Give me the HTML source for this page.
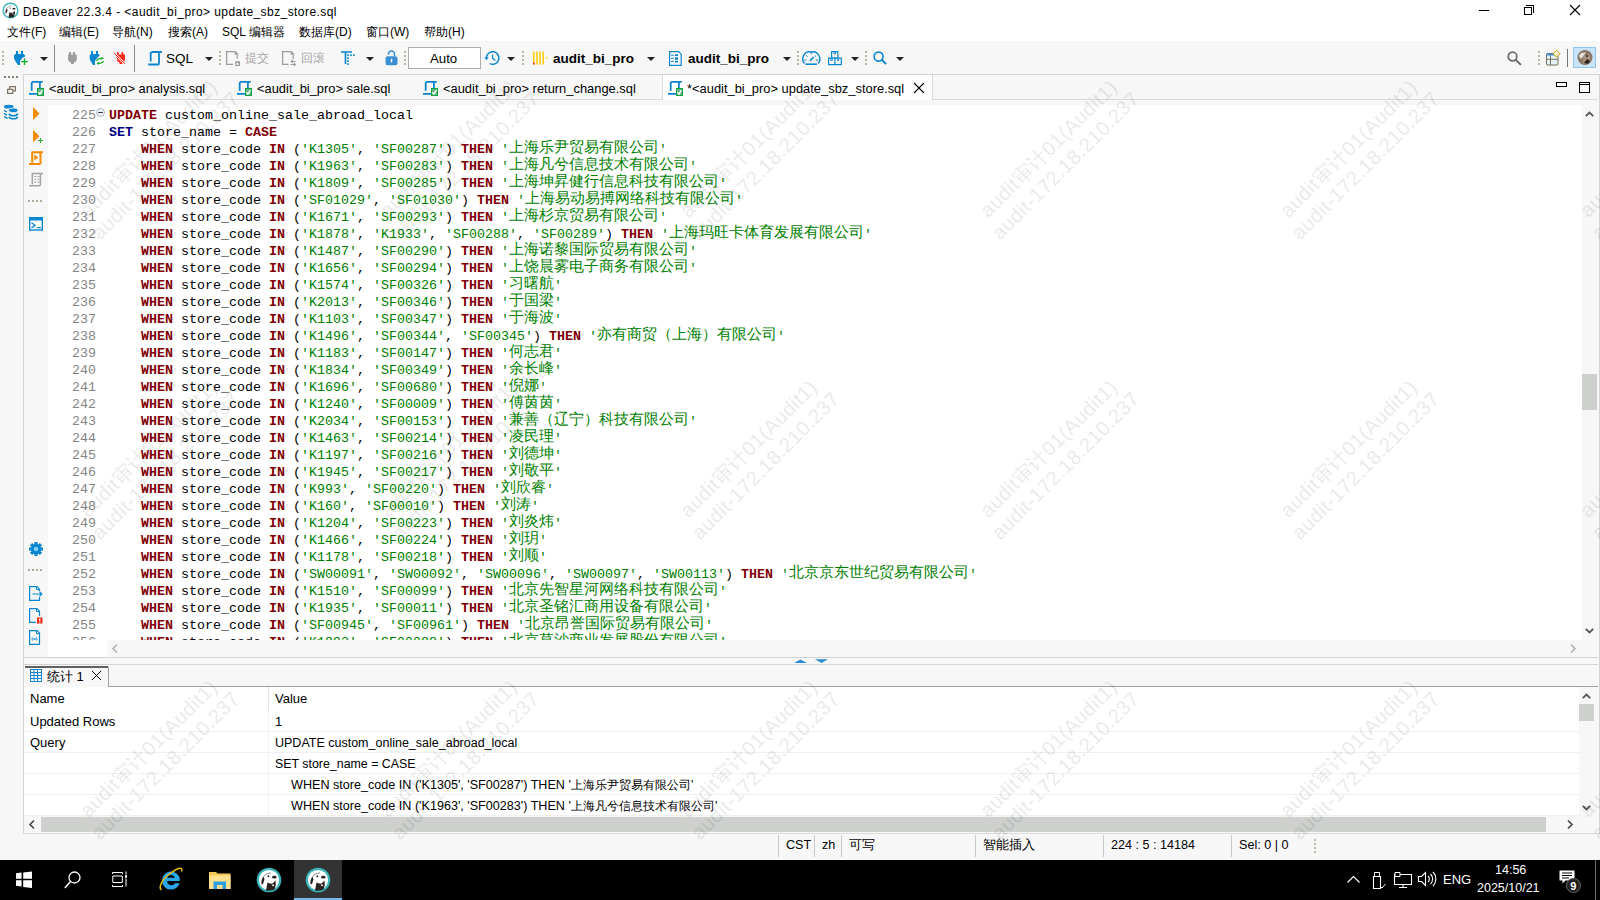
<!DOCTYPE html>
<html><head><meta charset="utf-8">
<style>
*{box-sizing:border-box}
html,body{margin:0;padding:0;width:1600px;height:900px;overflow:hidden;background:#f7f7f7;font-family:"Liberation Sans",sans-serif;color:#000}
.a{position:absolute}
svg{position:absolute;overflow:visible}
#title{left:0;top:0;width:1600px;height:41px;background:#fff}
.ttl{left:23px;top:4px;font-size:12px;letter-spacing:0.43px;line-height:16px;white-space:nowrap}
.mi{top:24px;font-size:12px;line-height:16px;white-space:nowrap}
.dd{width:0;height:0;border-left:4px solid transparent;border-right:4px solid transparent;border-top:4px solid #222}
.grip{width:2px;height:15px;background:repeating-linear-gradient(#bcb4a2 0 2px,transparent 2px 4px)}
.sep{width:1px;background:#8c8c8c}
.tbt{font-size:12px;line-height:14px;white-space:nowrap}
.tab{top:75px;height:24px;font-size:12.9px;line-height:16px;white-space:nowrap}
.ln{position:absolute;left:48px;width:48px;text-align:right;font-family:"Liberation Mono",monospace;font-size:13.333px;line-height:17px;color:#858585;white-space:pre}
.cl{position:absolute;left:109px;font-family:"Liberation Mono",monospace;font-size:13.333px;line-height:17px;color:#000;white-space:pre}
.kw{color:#7f0000;font-weight:bold}
.kb{color:#000080;font-weight:bold}
.st{color:#008000}
.cj{font-size:15px;line-height:17px;font-weight:300;position:relative;top:-1.5px}
.wm{position:absolute;width:300px;height:48px;text-align:center;font-size:20px;letter-spacing:0.5px;line-height:24px;color:#000;opacity:0.08;transform:rotate(-45deg);white-space:nowrap;pointer-events:none}
.rc{position:absolute;font-size:13px;line-height:16px;white-space:pre}
.sb{position:absolute;top:835px;width:1px;height:22px;background:#c8c8c8}
.st2{position:absolute;top:837px;font-size:12.6px;line-height:16px;white-space:nowrap}
</style></head><body>

<!-- title + menu -->
<div id="title" class="a"></div>
<svg style="left:1.5px;top:2.3px" width="17" height="17" viewBox="0 0 26 26"><circle cx="13" cy="13" r="11.2" fill="#fff" stroke="#3bb4b8" stroke-width="2.2"/><path d="M5.5 17.5C5 14 6 11 7.5 9.5L8.5 12.5 7 17z" fill="#2a2320"/><path d="M7.5 9.5C9 7.5 11.5 6 15 6" stroke="#777" stroke-width="0.9" fill="none"/><ellipse cx="18.3" cy="10.2" rx="2.3" ry="1.4" fill="#2a2320"/><circle cx="12.4" cy="9.2" r="0.95" fill="#2a2320"/><path d="M10 23.5L11.5 15.5Q14 17 16.5 16.5L19.5 13.5 19.8 18 18.5 22.5Q14 24.5 10 23.5z" fill="#2a2320"/><rect x="16" y="17.6" width="2" height="1.3" fill="#fff"/></svg>
<div class="a ttl">DBeaver 22.3.4 - &lt;audit_bi_pro&gt; update_sbz_store.sql</div>
<!-- window controls -->
<div class="a" style="left:1479px;top:10px;width:10px;height:1px;background:#000"></div>
<div class="a" style="left:1524px;top:7px;width:8px;height:8px;border:1px solid #000"></div>
<div class="a" style="left:1526px;top:5px;width:8px;height:8px;border-top:1px solid #000;border-right:1px solid #000"></div>
<svg style="left:1570px;top:5px" width="10" height="10" viewBox="0 0 10 10"><path d="M0 0L10 10M10 0L0 10" stroke="#000" stroke-width="1.1"/></svg>

<div class="a mi" style="left:7px">文件(F)</div>
<div class="a mi" style="left:59px">编辑(E)</div>
<div class="a mi" style="left:112px">导航(N)</div>
<div class="a mi" style="left:168px">搜索(A)</div>
<div class="a mi" style="left:222px">SQL 编辑器</div>
<div class="a mi" style="left:299px">数据库(D)</div>
<div class="a mi" style="left:366px">窗口(W)</div>
<div class="a mi" style="left:424px">帮助(H)</div>

<!-- toolbar -->
<div class="a grip" style="left:2px;top:51px"></div>
<svg style="left:12px;top:48px" width="20" height="20" viewBox="0 0 20 20">
 <path d="M4 3h2v3H4zM9 3h2v3H9z" fill="#0b87d1"/>
 <path d="M2 7.2L3.2 6h8.3l1.6 1.5v1L10.5 9.8 8 13v4H6L3 12.5 2 10.5z" fill="#0b87d1"/>
 <path d="M12.5 10.2v6.8M9.2 13.6h6.8" stroke="#12b02a" stroke-width="1.4"/>
</svg>
<div class="a dd" style="left:40px;top:57px"></div>
<div class="a sep" style="left:54px;top:45px;height:27px"></div>
<svg style="left:64px;top:48px" width="64" height="20" viewBox="0 0 64 20">
 <path d="M5 4h2v3H5zM9 4h2v3H9z" fill="#9e9e9e"/>
 <path d="M4 6.5h8.8v4.5c0 1.5-1.2 3-3 3.5V16H7v-1.5C5.2 14 4 12.5 4 11z" fill="#9e9e9e"/>
 <path d="M27 3h2v3h-2zM32 3h2v3h-2z" fill="#0b87d1"/>
 <path d="M25.8 7L27 6h7.5l1.3 1.5L33.5 9.5 31 13v4h-2l-2.8-4.5-0.5-2z" fill="#0b87d1"/>
 <path d="M32.5 12.8C33.5 10.8 36 10.2 38.8 10.5" stroke="#12b02a" stroke-width="1.1" fill="none"/><path d="M37.5 8.8l2.2 1.8-2.2 1.5z" fill="#12b02a"/>
 <path d="M39.5 13C38.5 15 36 15.6 33.5 15.3" stroke="#12b02a" stroke-width="1.1" fill="none"/><path d="M34.8 13.8l-2.3 1.6 2.3 1.6z" fill="#12b02a"/>
 <path d="M53 4h1.7v3H53zM57.5 4h1.7v3h-1.7z" fill="#ff2a1a"/>
 <path d="M51.5 6.5H61v5c0 1.5-1.2 2.5-2.5 3V16h-3v-1.5c-1.5-.5-2.5-1.5-2.5-3z" fill="#ff2a1a"/>
 <path d="M49.5 4.5L61.5 16.5" stroke="#f7f7f7" stroke-width="2.2"/><path d="M49.8 4.8L61.2 16.2" stroke="#ff2a1a" stroke-width="1"/>
</svg>
<div class="a sep" style="left:134px;top:45px;height:27px"></div>
<svg style="left:148px;top:51px" width="15" height="15" viewBox="0 0 15 15"><path d="M3.3 1h10.5M2.7 1v9.5M11 1v11.5c0 .5-.5 1-1 1H0.2" stroke="#0b84cf" stroke-width="1.8" fill="none"/></svg>
<div class="a tbt" style="left:166px;top:52px;font-size:13.5px">SQL</div>
<div class="a dd" style="left:205px;top:57px"></div>
<div class="a grip" style="left:219px;top:51px"></div>
<svg style="left:226px;top:51px" width="14" height="15" viewBox="0 0 14 15"><path d="M9 0.6H0.6v12.8H7M11.2 2.8v5" stroke="#9c9c9c" stroke-width="1.2" fill="none"/><path d="M8.6 0h0.8l2.4 2.4v1H8.6z" fill="#9c9c9c"/><rect x="9.8" y="10.8" width="3.6" height="3.6" stroke="#9c9c9c" stroke-width="1.2" fill="none"/><path d="M10.5 11.5h2v1.4" stroke="#9c9c9c" stroke-width="0.8" fill="none"/></svg>
<div class="a tbt" style="left:245px;top:51px;color:#a8a8a8">提交</div>
<svg style="left:282px;top:51px" width="15" height="15" viewBox="0 0 15 15"><path d="M9 0.6H0.6v12.8H6.5M11.2 2.8v5.5" stroke="#9c9c9c" stroke-width="1.2" fill="none"/><path d="M8.6 0h0.8l2.4 2.4v1H8.6z" fill="#9c9c9c"/><path d="M8.5 10.5h5M9 10.5l1.5-1.3v2.6zM8.5 13.5h5M13.8 13.5l-1.5-1.3v2.6z" stroke="#9c9c9c" stroke-width="1" fill="#9c9c9c"/></svg>
<div class="a tbt" style="left:301px;top:51px;color:#a8a8a8">回滚</div>
<svg style="left:341px;top:50px" width="16" height="16" viewBox="0 0 16 16"><path d="M0 2h11M4.5 2v12" stroke="#0b87d1" stroke-width="1.7"/><path d="M6.2 4.3h1.6v1.6H6.2zM9.2 4.3h1.6v1.6H9.2zM12.2 4.3h1.6v1.6h-1.6zM6.2 7.3h1.6v1.6H6.2zM6.2 10.3h1.6v1.6H6.2zM6.2 13.3h1.6v1.6H6.2z" fill="#0b87d1"/></svg>
<div class="a dd" style="left:366px;top:57px"></div>
<svg style="left:385px;top:50px" width="13" height="16" viewBox="0 0 13 16"><path d="M3.5 4.8V4a3 3 0 0 1 6 -0.2V6" stroke="#3a8fd4" stroke-width="1.5" fill="none"/><rect x="0.5" y="6.2" width="12" height="9" rx="2.2" fill="#3a8fd4"/><rect x="5.8" y="8.8" width="1.5" height="3.6" fill="#fff"/></svg>
<div class="a grip" style="left:404px;top:51px"></div>
<div class="a" style="left:408px;top:47px;width:73px;height:22px;background:#fff;border:1px solid #adadad"></div>
<div class="a tbt" style="left:430px;top:52px;font-size:13.2px">Auto</div>
<svg style="left:484px;top:51px" width="16" height="15" viewBox="0 0 16 15"><path d="M2.4 6.6A6.3 6.3 0 1 1 5.8 12.6" stroke="#0b87d1" stroke-width="1.5" fill="none"/><path d="M0.2 6.3h4.4L2.4 9.3z" fill="#0b87d1"/><path d="M8.6 3.8v3.5l2.8 2.2" stroke="#0b87d1" stroke-width="1.3" fill="none"/></svg>
<div class="a dd" style="left:507px;top:57px"></div>
<div class="a grip" style="left:522px;top:51px"></div>
<svg style="left:532px;top:51px" width="16" height="15" viewBox="0 0 16 15"><path d="M1.8 0.5v13M5 0.5v13M8 0.5v13M11.2 0.5v13" stroke="#ffcc00" stroke-width="1.5"/><rect x="1" y="11.5" width="1.6" height="2" fill="#f22"/><circle cx="14.5" cy="6.8" r="0.9" fill="#ffd800"/></svg>
<div class="a tbt" style="left:553px;top:52px;font-size:13.5px;font-weight:bold">audit_bi_pro</div>
<div class="a dd" style="left:647px;top:57px"></div>
<svg style="left:669px;top:51px" width="13" height="15" viewBox="0 0 13 15"><path d="M0.6 0.6h9l2.6 2.6v11.2H0.6z" stroke="#0b87d1" stroke-width="1.2" fill="none"/><path d="M2 4.2h2.8M2 7.3h2.8M2 10.4h2.8" stroke="#0b87d1" stroke-width="1"/><path d="M6 3.2h3v1.8H6zM6 6.2h3v2.6H6zM6 9.7h3v1.8H6z" fill="#0b87d1"/></svg>
<div class="a tbt" style="left:688px;top:52px;font-size:13.5px;font-weight:bold">audit_bi_pro</div>
<div class="a dd" style="left:783px;top:57px"></div>
<div class="a grip" style="left:797px;top:51px"></div>
<svg style="left:803px;top:51px" width="17" height="15" viewBox="0 0 17 15"><path d="M1.5 12.5A7 7 0 0 1 8.2 1 7 7 0 0 1 15 12.5" stroke="#0b87d1" stroke-width="1.4" fill="none"/><path d="M2.5 13.2h11.4" stroke="#0b87d1" stroke-width="1.6"/><path d="M8.2 1.2v2.2M3.2 4.5l1.4 1.2M13.2 4.5l-1.4 1.2M1.2 9h2.2M13 9h2.2" stroke="#0b87d1" stroke-width="1"/><path d="M6.8 10l3.8-4" stroke="#0b87d1" stroke-width="1.6"/></svg>
<svg style="left:828px;top:51px" width="14" height="15" viewBox="0 0 14 15"><path d="M3.6 0.6h6.3v6.3H3.6zM0.6 7.2h6.3v6.4H0.6zM6.9 7.2h6.4v6.4H6.9z" stroke="#0b87d1" stroke-width="1.2" fill="none"/><path d="M6 1v2h1.5V1M2.8 7.5v2h1.5v-2M9.3 7.5v2h1.5v-2" stroke="#0b87d1" stroke-width="0.9" fill="none"/></svg>
<div class="a dd" style="left:851px;top:57px"></div>
<div class="a grip" style="left:865px;top:51px"></div>
<svg style="left:873px;top:51px" width="14" height="14" viewBox="0 0 14 14"><circle cx="5.6" cy="5.6" r="4.5" stroke="#0b87d1" stroke-width="1.6" fill="none"/><path d="M8.8 8.8l4.3 4.3" stroke="#0b87d1" stroke-width="2"/></svg>
<div class="a dd" style="left:896px;top:57px"></div>
<!-- right toolbar -->
<svg style="left:1507px;top:51px" width="15" height="15" viewBox="0 0 15 15">
 <circle cx="5.5" cy="5.5" r="4.3" stroke="#6a6a6a" stroke-width="1.7" fill="none"/><path d="M8.6 8.6l5.3 5.3" stroke="#6a6a6a" stroke-width="2"/>
</svg>
<div class="a grip" style="left:1538px;top:51px"></div>
<svg style="left:1546px;top:50px" width="15" height="16" viewBox="0 0 15 16">
 <rect x="0.5" y="3.5" width="11.5" height="11.5" rx="1" fill="#e3f3fc" stroke="#7d6f55" stroke-width="1"/><path d="M0.5 4.5h11.5" stroke="#3f8fd6" stroke-width="2"/><path d="M4.5 5.5v9.5M0.5 9.3h11.5" stroke="#7d6f55" stroke-width="1"/>
 <path d="M10.5 0.2L14 3.7 10.5 7.2 7 3.7z" fill="#fff4c8" stroke="#c39a1c" stroke-width="1"/>
</svg>
<div class="a sep" style="left:1567px;top:49px;height:18px;background:#777"></div>
<div class="a" style="left:1573px;top:47px;width:23px;height:21px;background:#c9e3f8;border:1px solid #8ec8f2"></div>
<svg style="left:1577px;top:50px" width="16" height="16" viewBox="0 0 16 16">
 <circle cx="8" cy="7.5" r="7.5" fill="#8a7565"/><path d="M2 6C3 3 6 2 9 2.5L4 9z" fill="#e8e2da"/><path d="M6 6L12 4l2 4-3 6H6z" fill="#a48e7c"/><path d="M7 13l3-4 3 2-2 3z" fill="#2a2522"/><circle cx="10" cy="6" r="1" fill="#222"/>
</svg>

<!-- left strip -->
<div class="a" style="left:4px;top:76px;width:15px;height:2px;background:repeating-linear-gradient(90deg,#8b8170 0 2px,transparent 2px 4px)"></div>
<svg style="left:7px;top:86px" width="9" height="8" viewBox="0 0 9 8"><path d="M2.6 0.6h5.8v4.2H2.6z" stroke="#7d7464" stroke-width="1.2" fill="#f7f7f7"/><path d="M0.6 3.3h5.2v4.1H0.6z" stroke="#7d7464" stroke-width="1.2" fill="#f7f7f7"/></svg>
<svg style="left:0px;top:100px" width="24" height="24" viewBox="0 0 24 24" fill="none" stroke="#0b87d1"><ellipse cx="8.8" cy="6.7" rx="4.9" ry="1.9" fill="#0b87d1" stroke="none"/><path d="M4.3 10C4.8 11 6 11.6 7 11.7M4.3 13.2C4.8 14.2 6 14.8 7 14.9M4.3 16.4C4.8 17.4 6 18 7.6 18.2" stroke-width="1.5"/><ellipse cx="13.3" cy="10.3" rx="4.6" ry="2.3" fill="#0b87d1" stroke="#f7f7f7" stroke-width="0.8"/><path d="M8.9 13.6C9.5 15 11.5 15.7 13.3 15.7S17.1 15 17.7 13.6M8.9 16.7C9.5 18.1 11.5 18.8 13.3 18.8S17.1 18.1 17.7 16.7" stroke-width="1.6"/></svg>

<!-- tab bar -->
<div class="a" style="left:23px;top:74px;width:1576px;height:1px;background:#d4d4d4"></div>
<div class="a" style="left:23px;top:74px;width:1px;height:760px;background:#d4d4d4"></div>
<div class="a" style="left:1599px;top:74px;width:1px;height:760px;background:#d4d4d4"></div>
<div class="a" style="left:24px;top:99px;width:1574px;height:1px;background:#d9d9d9"></div>
<div class="a" style="left:662px;top:75px;width:271px;height:25px;background:#fff;border-left:1px solid #d9d9d9;border-right:1px solid #d9d9d9"></div>
<svg style="left:29px;top:81px" width="15" height="15" viewBox="0 0 15 15"><path d="M2.9 0.9h10.9M2.7 0.9v8.8M10.9 0.9v6.5M0 12.9h8.5" stroke="#0b84cf" stroke-width="1.8" fill="none"/><rect x="8" y="7" width="7" height="8" fill="#12a040"/><rect x="9" y="8" width="5" height="6" fill="#62b884"/><path d="M9.3 11.2l1.6 1.9 2.6-4" stroke="#fff" stroke-width="1.3" fill="none"/></svg>
<div class="a tab" style="left:49px;top:81px">&lt;audit_bi_pro&gt; analysis.sql</div>
<svg style="left:237px;top:81px" width="15" height="15" viewBox="0 0 15 15"><path d="M2.9 0.9h10.9M2.7 0.9v8.8M10.9 0.9v6.5M0 12.9h8.5" stroke="#0b84cf" stroke-width="1.8" fill="none"/><rect x="8" y="7" width="7" height="8" fill="#12a040"/><rect x="9" y="8" width="5" height="6" fill="#62b884"/><path d="M9.3 11.2l1.6 1.9 2.6-4" stroke="#fff" stroke-width="1.3" fill="none"/></svg>
<div class="a tab" style="left:257px;top:81px">&lt;audit_bi_pro&gt; sale.sql</div>
<svg style="left:423px;top:81px" width="15" height="15" viewBox="0 0 15 15"><path d="M2.9 0.9h10.9M2.7 0.9v8.8M10.9 0.9v6.5M0 12.9h8.5" stroke="#0b84cf" stroke-width="1.8" fill="none"/><rect x="8" y="7" width="7" height="8" fill="#12a040"/><rect x="9" y="8" width="5" height="6" fill="#62b884"/><path d="M9.3 11.2l1.6 1.9 2.6-4" stroke="#fff" stroke-width="1.3" fill="none"/></svg>
<div class="a tab" style="left:443px;top:81px">&lt;audit_bi_pro&gt; return_change.sql</div>
<svg style="left:668px;top:81px" width="15" height="15" viewBox="0 0 15 15"><path d="M2.9 0.9h10.9M2.7 0.9v8.8M10.9 0.9v6.5M0 12.9h8.5" stroke="#0b84cf" stroke-width="1.8" fill="none"/><rect x="8" y="7" width="7" height="8" fill="#12a040"/><rect x="9" y="8" width="5" height="6" fill="#62b884"/><path d="M9.3 11.2l1.6 1.9 2.6-4" stroke="#fff" stroke-width="1.3" fill="none"/></svg>
<div class="a tab" style="left:687px;top:81px">*&lt;audit_bi_pro&gt; update_sbz_store.sql</div>
<svg style="left:914px;top:83px" width="10" height="10" viewBox="0 0 10 10"><path d="M0 0L10 10M10 0L0 10" stroke="#000" stroke-width="1.1"/></svg>
<svg style="left:1556px;top:82px" width="11" height="5" viewBox="0 0 11 5"><rect x="0.5" y="0.5" width="10" height="4" stroke="#000" stroke-width="1" fill="#fff"/></svg>
<svg style="left:1579px;top:82px" width="11" height="11" viewBox="0 0 11 11"><rect x="0.5" y="0.5" width="10" height="10" stroke="#000" stroke-width="1" fill="#fff"/><path d="M0.5 2.5h10" stroke="#000"/></svg>

<!-- editor -->
<div class="a" style="left:48px;top:105px;width:1534px;height:535px;background:#fff"></div>
<!-- ruler icons -->
<svg style="left:33px;top:107px" width="7" height="13" viewBox="0 0 7 13"><path d="M0 0l6.5 6.5L0 13z" fill="#f28b00"/></svg>
<svg style="left:32px;top:130px" width="12" height="14" viewBox="0 0 12 14"><path d="M1 0l6.5 6.2L1 12.3z" fill="#f28b00"/><path d="M8.5 8v5M6 10.5h5" stroke="#3aa83a" stroke-width="1.1"/></svg>
<svg style="left:28px;top:150px" width="16" height="16" viewBox="0 0 16 16"><path d="M3.5 2.2h11.5M4.2 2.2v10.5M12.5 2.5v11.5M1 14h11.5" stroke="#f28b00" stroke-width="2" fill="none"/><path d="M6.3 4.5l4 3-4 3z" fill="#f28b00"/></svg>
<svg style="left:28px;top:172px" width="16" height="16" viewBox="0 0 16 16"><path d="M3.5 1.6h11.5M4.3 1.6v10.8M12.4 2v11.5M1 13.8h11.4" stroke="#a5a5a5" stroke-width="1.5" fill="none"/><path d="M6.3 4.5h2M9.6 4.5h2M6.3 7.3h2M9.6 7.3h2M6.3 10.1h2M9.6 10.1h2" stroke="#a5a5a5" stroke-width="1.1"/></svg>
<div class="a" style="left:28px;top:200px;width:14px;height:2px;background:repeating-linear-gradient(90deg,#b3aa98 0 2px,transparent 2px 4px)"></div>
<svg style="left:29px;top:217px" width="14" height="14" viewBox="0 0 14 14"><rect x="0.7" y="0.7" width="12.6" height="12.3" stroke="#0b87d1" stroke-width="1.4" fill="#fff"/><path d="M0.7 2.2h12.6" stroke="#0b87d1" stroke-width="2.6"/><path d="M2.5 5.8l3.6 2.6-3.6 2.6M7.8 10.6h4" stroke="#0b87d1" stroke-width="1.3" fill="none"/></svg>
<svg style="left:28.8px;top:541.7px" width="14" height="14" viewBox="0 0 14 14"><g transform="translate(7 7)" fill="#0b87d1"><circle r="5.2"/><rect x="-1.6" y="-7" width="3.2" height="14"/><rect x="-1.6" y="-7" width="3.2" height="14" transform="rotate(45)"/><rect x="-1.6" y="-7" width="3.2" height="14" transform="rotate(90)"/><rect x="-1.6" y="-7" width="3.2" height="14" transform="rotate(135)"/><circle r="2.3" fill="#7ccdf3"/></g></svg>
<div class="a" style="left:28px;top:569px;width:14px;height:2px;background:repeating-linear-gradient(90deg,#b3aa98 0 2px,transparent 2px 4px)"></div>
<svg style="left:29px;top:586px" width="14" height="15" viewBox="0 0 14 15"><path d="M10.5 5V3.2L8 0.6H0.6v13.8h9.9V11" stroke="#0b87d1" stroke-width="1.2" fill="none"/><path d="M7.5 0.6v3h3" stroke="#0b87d1" stroke-width="1" fill="none"/><path d="M3.5 8h9M10.5 5.8l2.3 2.2-2.3 2.2" stroke="#0b87d1" stroke-width="1.2" fill="none"/></svg>
<svg style="left:29px;top:608px" width="14" height="16" viewBox="0 0 14 16"><path d="M10.5 8V3.2L8 0.6H0.6v13.8H7" stroke="#0b87d1" stroke-width="1.2" fill="none"/><path d="M7.5 0.6v3h3" stroke="#0b87d1" stroke-width="1" fill="none"/><rect x="8" y="9.5" width="5.5" height="6" fill="#ef2b1c"/><path d="M10.75 10.5v2.5M10.75 13.8v1" stroke="#fff" stroke-width="1.2"/></svg>
<svg style="left:29px;top:630px" width="13" height="15" viewBox="0 0 13 15"><path d="M10.5 14.4V3.2L8 0.6H0.6v13.8z" stroke="#0b87d1" stroke-width="1.2" fill="none"/><path d="M7.5 0.6v3h3" stroke="#0b87d1" stroke-width="1" fill="none"/><path d="M3.5 7.5q-1 1.5 0 3M7.5 7.5q1 1.5 0 3M4.5 8l2 2M6.5 8l-2 2" stroke="#0b87d1" stroke-width="0.9" fill="none"/></svg>

<div class="ln" style="top:107px">225</div><div class="cl" style="top:107px"><span class="kw">UPDATE</span> custom_online_sale_abroad_local</div>
<div class="ln" style="top:124px">226</div><div class="cl" style="top:124px"><span class="kb">SET</span> store_name = <span class="kw">CASE</span></div>
<div class="ln" style="top:141px">227</div><div class="cl" style="top:141px">    <span class="kw">WHEN</span> store_code <span class="kw">IN</span> (<span class="st">'K1305'</span>, <span class="st">'SF00287'</span>) <span class="kw">THEN</span> <span class="st">'<span class="cj">上海乐尹贸易有限公司</span>'</span></div>
<div class="ln" style="top:158px">228</div><div class="cl" style="top:158px">    <span class="kw">WHEN</span> store_code <span class="kw">IN</span> (<span class="st">'K1963'</span>, <span class="st">'SF00283'</span>) <span class="kw">THEN</span> <span class="st">'<span class="cj">上海凡兮信息技术有限公司</span>'</span></div>
<div class="ln" style="top:175px">229</div><div class="cl" style="top:175px">    <span class="kw">WHEN</span> store_code <span class="kw">IN</span> (<span class="st">'K1809'</span>, <span class="st">'SF00285'</span>) <span class="kw">THEN</span> <span class="st">'<span class="cj">上海坤昇健行信息科技有限公司</span>'</span></div>
<div class="ln" style="top:192px">230</div><div class="cl" style="top:192px">    <span class="kw">WHEN</span> store_code <span class="kw">IN</span> (<span class="st">'SF01029'</span>, <span class="st">'SF01030'</span>) <span class="kw">THEN</span> <span class="st">'<span class="cj">上海易动易搏网络科技有限公司</span>'</span></div>
<div class="ln" style="top:209px">231</div><div class="cl" style="top:209px">    <span class="kw">WHEN</span> store_code <span class="kw">IN</span> (<span class="st">'K1671'</span>, <span class="st">'SF00293'</span>) <span class="kw">THEN</span> <span class="st">'<span class="cj">上海杉京贸易有限公司</span>'</span></div>
<div class="ln" style="top:226px">232</div><div class="cl" style="top:226px">    <span class="kw">WHEN</span> store_code <span class="kw">IN</span> (<span class="st">'K1878'</span>, <span class="st">'K1933'</span>, <span class="st">'SF00288'</span>, <span class="st">'SF00289'</span>) <span class="kw">THEN</span> <span class="st">'<span class="cj">上海玛旺卡体育发展有限公司</span>'</span></div>
<div class="ln" style="top:243px">233</div><div class="cl" style="top:243px">    <span class="kw">WHEN</span> store_code <span class="kw">IN</span> (<span class="st">'K1487'</span>, <span class="st">'SF00290'</span>) <span class="kw">THEN</span> <span class="st">'<span class="cj">上海诺黎国际贸易有限公司</span>'</span></div>
<div class="ln" style="top:260px">234</div><div class="cl" style="top:260px">    <span class="kw">WHEN</span> store_code <span class="kw">IN</span> (<span class="st">'K1656'</span>, <span class="st">'SF00294'</span>) <span class="kw">THEN</span> <span class="st">'<span class="cj">上饶晨雾电子商务有限公司</span>'</span></div>
<div class="ln" style="top:277px">235</div><div class="cl" style="top:277px">    <span class="kw">WHEN</span> store_code <span class="kw">IN</span> (<span class="st">'K1574'</span>, <span class="st">'SF00326'</span>) <span class="kw">THEN</span> <span class="st">'<span class="cj">习曙航</span>'</span></div>
<div class="ln" style="top:294px">236</div><div class="cl" style="top:294px">    <span class="kw">WHEN</span> store_code <span class="kw">IN</span> (<span class="st">'K2013'</span>, <span class="st">'SF00346'</span>) <span class="kw">THEN</span> <span class="st">'<span class="cj">于国梁</span>'</span></div>
<div class="ln" style="top:311px">237</div><div class="cl" style="top:311px">    <span class="kw">WHEN</span> store_code <span class="kw">IN</span> (<span class="st">'K1103'</span>, <span class="st">'SF00347'</span>) <span class="kw">THEN</span> <span class="st">'<span class="cj">于海波</span>'</span></div>
<div class="ln" style="top:328px">238</div><div class="cl" style="top:328px">    <span class="kw">WHEN</span> store_code <span class="kw">IN</span> (<span class="st">'K1496'</span>, <span class="st">'SF00344'</span>, <span class="st">'SF00345'</span>) <span class="kw">THEN</span> <span class="st">'<span class="cj">亦有商贸（上海）有限公司</span>'</span></div>
<div class="ln" style="top:345px">239</div><div class="cl" style="top:345px">    <span class="kw">WHEN</span> store_code <span class="kw">IN</span> (<span class="st">'K1183'</span>, <span class="st">'SF00147'</span>) <span class="kw">THEN</span> <span class="st">'<span class="cj">何志君</span>'</span></div>
<div class="ln" style="top:362px">240</div><div class="cl" style="top:362px">    <span class="kw">WHEN</span> store_code <span class="kw">IN</span> (<span class="st">'K1834'</span>, <span class="st">'SF00349'</span>) <span class="kw">THEN</span> <span class="st">'<span class="cj">余长峰</span>'</span></div>
<div class="ln" style="top:379px">241</div><div class="cl" style="top:379px">    <span class="kw">WHEN</span> store_code <span class="kw">IN</span> (<span class="st">'K1696'</span>, <span class="st">'SF00680'</span>) <span class="kw">THEN</span> <span class="st">'<span class="cj">倪娜</span>'</span></div>
<div class="ln" style="top:396px">242</div><div class="cl" style="top:396px">    <span class="kw">WHEN</span> store_code <span class="kw">IN</span> (<span class="st">'K1240'</span>, <span class="st">'SF00009'</span>) <span class="kw">THEN</span> <span class="st">'<span class="cj">傅茵茵</span>'</span></div>
<div class="ln" style="top:413px">243</div><div class="cl" style="top:413px">    <span class="kw">WHEN</span> store_code <span class="kw">IN</span> (<span class="st">'K2034'</span>, <span class="st">'SF00153'</span>) <span class="kw">THEN</span> <span class="st">'<span class="cj">兼善（辽宁）科技有限公司</span>'</span></div>
<div class="ln" style="top:430px">244</div><div class="cl" style="top:430px">    <span class="kw">WHEN</span> store_code <span class="kw">IN</span> (<span class="st">'K1463'</span>, <span class="st">'SF00214'</span>) <span class="kw">THEN</span> <span class="st">'<span class="cj">凌民理</span>'</span></div>
<div class="ln" style="top:447px">245</div><div class="cl" style="top:447px">    <span class="kw">WHEN</span> store_code <span class="kw">IN</span> (<span class="st">'K1197'</span>, <span class="st">'SF00216'</span>) <span class="kw">THEN</span> <span class="st">'<span class="cj">刘德坤</span>'</span></div>
<div class="ln" style="top:464px">246</div><div class="cl" style="top:464px">    <span class="kw">WHEN</span> store_code <span class="kw">IN</span> (<span class="st">'K1945'</span>, <span class="st">'SF00217'</span>) <span class="kw">THEN</span> <span class="st">'<span class="cj">刘敬平</span>'</span></div>
<div class="ln" style="top:481px">247</div><div class="cl" style="top:481px">    <span class="kw">WHEN</span> store_code <span class="kw">IN</span> (<span class="st">'K993'</span>, <span class="st">'SF00220'</span>) <span class="kw">THEN</span> <span class="st">'<span class="cj">刘欣睿</span>'</span></div>
<div class="ln" style="top:498px">248</div><div class="cl" style="top:498px">    <span class="kw">WHEN</span> store_code <span class="kw">IN</span> (<span class="st">'K160'</span>, <span class="st">'SF00010'</span>) <span class="kw">THEN</span> <span class="st">'<span class="cj">刘涛</span>'</span></div>
<div class="ln" style="top:515px">249</div><div class="cl" style="top:515px">    <span class="kw">WHEN</span> store_code <span class="kw">IN</span> (<span class="st">'K1204'</span>, <span class="st">'SF00223'</span>) <span class="kw">THEN</span> <span class="st">'<span class="cj">刘炎炜</span>'</span></div>
<div class="ln" style="top:532px">250</div><div class="cl" style="top:532px">    <span class="kw">WHEN</span> store_code <span class="kw">IN</span> (<span class="st">'K1466'</span>, <span class="st">'SF00224'</span>) <span class="kw">THEN</span> <span class="st">'<span class="cj">刘玥</span>'</span></div>
<div class="ln" style="top:549px">251</div><div class="cl" style="top:549px">    <span class="kw">WHEN</span> store_code <span class="kw">IN</span> (<span class="st">'K1178'</span>, <span class="st">'SF00218'</span>) <span class="kw">THEN</span> <span class="st">'<span class="cj">刘顺</span>'</span></div>
<div class="ln" style="top:566px">252</div><div class="cl" style="top:566px">    <span class="kw">WHEN</span> store_code <span class="kw">IN</span> (<span class="st">'SW00091'</span>, <span class="st">'SW00092'</span>, <span class="st">'SW00096'</span>, <span class="st">'SW00097'</span>, <span class="st">'SW00113'</span>) <span class="kw">THEN</span> <span class="st">'<span class="cj">北京京东世纪贸易有限公司</span>'</span></div>
<div class="ln" style="top:583px">253</div><div class="cl" style="top:583px">    <span class="kw">WHEN</span> store_code <span class="kw">IN</span> (<span class="st">'K1510'</span>, <span class="st">'SF00099'</span>) <span class="kw">THEN</span> <span class="st">'<span class="cj">北京先智星河网络科技有限公司</span>'</span></div>
<div class="ln" style="top:600px">254</div><div class="cl" style="top:600px">    <span class="kw">WHEN</span> store_code <span class="kw">IN</span> (<span class="st">'K1935'</span>, <span class="st">'SF00011'</span>) <span class="kw">THEN</span> <span class="st">'<span class="cj">北京圣铭汇商用设备有限公司</span>'</span></div>
<div class="ln" style="top:617px">255</div><div class="cl" style="top:617px">    <span class="kw">WHEN</span> store_code <span class="kw">IN</span> (<span class="st">'SF00945'</span>, <span class="st">'SF00961'</span>) <span class="kw">THEN</span> <span class="st">'<span class="cj">北京昂誉国际贸易有限公司</span>'</span></div>
<div class="ln" style="top:634px">256</div><div class="cl" style="top:634px">    <span class="kw">WHEN</span> store_code <span class="kw">IN</span> (<span class="st">'K1893'</span>, <span class="st">'SF00088'</span>) <span class="kw">THEN</span> <span class="st">'<span class="cj">北京草沙商业发展股份有限公司</span>'</span></div>
<!-- fold marker -->
<svg style="left:96px;top:108px" width="10" height="10" viewBox="0 0 10 10"><circle cx="4.5" cy="4.5" r="4" fill="#eef1f6" stroke="#9aa5b5" stroke-width="0.8"/><path d="M2.2 4.5h4.6" stroke="#333" stroke-width="1"/></svg>
<!-- top ruler strip -->
<div class="a" style="left:48px;top:100px;width:1534px;height:5px;background:#f7f7f7"></div>
<!-- bottom clip (hscroll) -->
<div class="a" style="left:48px;top:640px;width:59px;height:17px;background:#fff"></div>
<div class="a" style="left:107px;top:640px;width:1491px;height:17px;background:#f7f7f7"></div>
<svg style="left:112px;top:644px" width="6" height="9" viewBox="0 0 6 9"><path d="M5 0.5L1 4.5 5 8.5" stroke="#b0b0b0" stroke-width="1.6" fill="none"/></svg>
<svg style="left:1570px;top:644px" width="6" height="9" viewBox="0 0 6 9"><path d="M1 0.5L5 4.5 1 8.5" stroke="#b0b0b0" stroke-width="1.6" fill="none"/></svg>
<!-- vscroll -->
<div class="a" style="left:1582px;top:105px;width:16px;height:535px;background:#f7f7f7"></div>
<svg style="left:1585px;top:111px" width="9" height="6" viewBox="0 0 9 6"><path d="M0.8 5.2L4.5 1.5 8.2 5.2" stroke="#555" stroke-width="1.8" fill="none"/></svg>
<svg style="left:1585px;top:628px" width="9" height="6" viewBox="0 0 9 6"><path d="M0.8 0.8L4.5 4.5 8.2 0.8" stroke="#555" stroke-width="1.8" fill="none"/></svg>
<div class="a" style="left:1582px;top:374px;width:15px;height:36px;background:#cdd0cd"></div>
<!-- splitter -->
<div class="a" style="left:24px;top:657px;width:1574px;height:1px;background:#d4d4d4"></div>
<div class="a" style="left:24px;top:664px;width:1574px;height:1px;background:#d4d4d4"></div>
<svg style="left:794px;top:659px" width="36" height="5" viewBox="0 0 36 5"><path d="M0 4l6.5-3.5L13 4z" fill="#2b8ad0"/><path d="M21 0.3h13l-6.5 3.7z" fill="#2b8ad0"/></svg>

<!-- results panel -->
<div class="a" style="left:108px;top:686px;width:1490px;height:1px;background:#a0a0a0"></div>
<div class="a" style="left:25px;top:666px;width:83px;height:2px;background:#5f625f"></div>
<div class="a" style="left:108px;top:667px;width:1px;height:20px;background:#a0a0a0"></div>
<svg style="left:30px;top:669px" width="12" height="13" viewBox="0 0 12 13"><rect x="0.5" y="0.5" width="11" height="12" fill="#fff" stroke="#1a84d0"/><path d="M0.5 3.5h11M0.5 6.5h11M0.5 9.5h11M4 0.5v12M7.5 0.5v12" stroke="#1a84d0" stroke-width="1"/></svg>
<div class="a rc" style="left:47px;top:669px">统计 1</div>
<svg style="left:92px;top:671px" width="9" height="9" viewBox="0 0 9 9"><path d="M0 0L9 9M9 0L0 9" stroke="#000" stroke-width="1"/></svg>
<div class="a" style="left:24px;top:687px;width:1555px;height:129px;background:#fff"></div>
<div class="a" style="left:268px;top:687px;width:1px;height:24px;background:#e3e3e3"></div>
<div class="a" style="left:268px;top:711px;width:1px;height:105px;background:#edf4f9"></div>
<div class="a" style="left:24px;top:731px;width:1555px;height:1px;background:#f0f0f0"></div>
<div class="a" style="left:24px;top:752px;width:1555px;height:1px;background:#f0f0f0"></div>
<div class="a" style="left:24px;top:773px;width:1555px;height:1px;background:#f0f0f0"></div>
<div class="a" style="left:24px;top:794px;width:1555px;height:1px;background:#f0f0f0"></div>
<div class="a" style="left:24px;top:815px;width:1555px;height:1px;background:#f0f0f0"></div>
<div class="a rc" style="left:30px;top:691px">Name</div>
<div class="a rc" style="left:275px;top:691px">Value</div>
<div class="a rc" style="left:30px;top:714px">Updated Rows</div>
<div class="a rc" style="left:275px;top:714px">1</div>
<div class="a rc" style="left:30px;top:735px">Query</div>
<div class="a rc" style="left:275px;top:735px;font-size:12.5px">UPDATE custom_online_sale_abroad_local</div>
<div class="a rc" style="left:275px;top:756px;font-size:12.4px">SET store_name = CASE</div>
<div class="a rc" style="left:291px;top:777px;font-size:12.6px">WHEN store_code IN ('K1305', 'SF00287') THEN '<span style="font-size:12.2px">上海乐尹贸易有限公司</span>'</div>
<div class="a rc" style="left:291px;top:798px;font-size:12.6px">WHEN store_code IN ('K1963', 'SF00283') THEN '<span style="font-size:12.2px">上海凡兮信息技术有限公司</span>'</div>
<!-- results vscroll -->
<div class="a" style="left:1579px;top:687px;width:19px;height:129px;background:#f7f7f7"></div>
<svg style="left:1582px;top:693px" width="9" height="6" viewBox="0 0 9 6"><path d="M0.8 5.2L4.5 1.5 8.2 5.2" stroke="#555" stroke-width="1.8" fill="none"/></svg>
<svg style="left:1582px;top:805px" width="9" height="6" viewBox="0 0 9 6"><path d="M0.8 0.8L4.5 4.5 8.2 0.8" stroke="#555" stroke-width="1.8" fill="none"/></svg>
<div class="a" style="left:1579px;top:704px;width:15px;height:17px;background:#cdd0cd"></div>
<!-- results hscroll -->
<div class="a" style="left:24px;top:816px;width:1574px;height:17px;background:#f7f7f7"></div>
<div class="a" style="left:41px;top:817px;width:1505px;height:15px;background:#cdd0cd"></div>
<svg style="left:29px;top:820px" width="6" height="9" viewBox="0 0 6 9"><path d="M5 0.5L1 4.5 5 8.5" stroke="#444" stroke-width="1.6" fill="none"/></svg>
<svg style="left:1567px;top:820px" width="6" height="9" viewBox="0 0 6 9"><path d="M1 0.5L5 4.5 1 8.5" stroke="#444" stroke-width="1.6" fill="none"/></svg>
<div class="a" style="left:24px;top:833px;width:1575px;height:1px;background:#dcdcdc"></div>

<!-- status bar -->
<div class="sb" style="left:778px"></div>
<div class="sb" style="left:814px"></div>
<div class="sb" style="left:841px"></div>
<div class="sb" style="left:975px"></div>
<div class="sb" style="left:1103px"></div>
<div class="sb" style="left:1231px"></div>
<div class="st2" style="left:786px">CST</div>
<div class="st2" style="left:822px">zh</div>
<div class="st2" style="left:849px">可写</div>
<div class="st2" style="left:983px">智能插入</div>
<div class="st2" style="left:1111px">224 : 5 : 14184</div>
<div class="st2" style="left:1239px">Sel: 0 | 0</div>
<div class="a" style="left:1314px;top:839px;width:2px;height:15px;background:repeating-linear-gradient(#c0b9a6 0 2px,transparent 2px 4px)"></div>

<!-- taskbar -->
<div class="a" style="left:0;top:860px;width:1600px;height:40px;background:#000"></div>
<div class="a" style="left:294px;top:860px;width:48px;height:40px;background:#333"></div>
<div class="a" style="left:294px;top:898px;width:48px;height:2px;background:#76b9ed"></div>
<svg style="left:16px;top:872px" width="16" height="16" viewBox="0 0 16 16"><path d="M0 1.3L5.6 0.6V6.8H0zM7.2 0.4L16 -0.6V6.8H7.2zM0 8.3H5.6V14.5L0 13.8zM7.2 8.3H16V16L7.2 15z" fill="#fff"/></svg>
<svg style="left:64px;top:871px" width="17" height="18" viewBox="0 0 17 18"><circle cx="10.5" cy="6.5" r="5.5" stroke="#fff" stroke-width="1.3" fill="none"/><path d="M6.5 10.5L0.8 17" stroke="#fff" stroke-width="1.5"/></svg>
<svg style="left:111px;top:871px" width="17" height="17" viewBox="0 0 17 17"><path d="M1.5 3V1.5h10V3M1.5 14v1.5h10V14M1.8 5h9.5v6.5H1.8z" stroke="#fff" stroke-width="1" fill="none"/><path d="M15 0.5v3M15 7.5v8" stroke="#fff" stroke-width="1"/><rect x="14" y="4.2" width="2" height="2.5" fill="#fff"/></svg>
<svg style="left:159px;top:867px" width="24" height="25" viewBox="0 0 24 25"><path d="M3 13.5a9 9 0 0 1 17.8-1.9v2.4H8.2a4.2 4.2 0 0 0 7.8 2.2h4.6A9 9 0 0 1 3 13.5z" fill="#2ba6ea"/><path d="M8.3 10.8a4 4 0 0 1 7.6 0z" fill="#000"/><path d="M2.5 23C-0.5 21 2 13 11 6.5S23.5 -0.5 22.8 4.5" stroke="#e9b90b" stroke-width="1.5" fill="none"/></svg>
<svg style="left:209px;top:871px" width="22" height="19" viewBox="0 0 22 19"><path d="M0 1h7l1.5 1.5H21.5V18H0z" fill="#f3c95a"/><path d="M0 4.5h21.5V18H0z" fill="#ffe28f"/><path d="M4.5 10.5h12.5V18h-3.5v-4h-5.5v4H4.5z" fill="#2d9fe0"/></svg>
<svg style="left:256px;top:867px" width="26" height="26" viewBox="0 0 26 26"><circle cx="13" cy="13" r="11.2" fill="#fff" stroke="#3bb4b8" stroke-width="2.2"/><path d="M5.5 17.5C5 14 6 11 7.5 9.5L8.5 12.5 7 17z" fill="#2a2320"/><path d="M7.5 9.5C9 7.5 11.5 6 15 6" stroke="#777" stroke-width="0.9" fill="none"/><ellipse cx="18.3" cy="10.2" rx="2.3" ry="1.4" fill="#2a2320"/><circle cx="12.4" cy="9.2" r="0.95" fill="#2a2320"/><path d="M10 23.5L11.5 15.5Q14 17 16.5 16.5L19.5 13.5 19.8 18 18.5 22.5Q14 24.5 10 23.5z" fill="#2a2320"/><rect x="16" y="17.6" width="2" height="1.3" fill="#fff"/></svg>
<svg style="left:305px;top:867px" width="26" height="26" viewBox="0 0 26 26"><circle cx="13" cy="13" r="11.2" fill="#fff" stroke="#3bb4b8" stroke-width="2.2"/><path d="M5.5 17.5C5 14 6 11 7.5 9.5L8.5 12.5 7 17z" fill="#2a2320"/><path d="M7.5 9.5C9 7.5 11.5 6 15 6" stroke="#777" stroke-width="0.9" fill="none"/><ellipse cx="18.3" cy="10.2" rx="2.3" ry="1.4" fill="#2a2320"/><circle cx="12.4" cy="9.2" r="0.95" fill="#2a2320"/><path d="M10 23.5L11.5 15.5Q14 17 16.5 16.5L19.5 13.5 19.8 18 18.5 22.5Q14 24.5 10 23.5z" fill="#2a2320"/><rect x="16" y="17.6" width="2" height="1.3" fill="#fff"/></svg>
<!-- tray -->
<svg style="left:1347px;top:875px" width="13" height="8" viewBox="0 0 13 8"><path d="M0.5 7.5L6.5 1.5 12.5 7.5" stroke="#fff" stroke-width="1.2" fill="none"/></svg>
<svg style="left:1372px;top:872px" width="14" height="18" viewBox="0 0 14 18"><path d="M1.5 4.5h7v12h-7z" stroke="#fff" stroke-width="1.1" fill="none"/><path d="M2.5 0.5h5v4h-5z" stroke="#fff" stroke-width="1" fill="none"/><path d="M8 14l2 2 3.5-4" stroke="#fff" stroke-width="1" fill="none"/></svg>
<svg style="left:1394px;top:872px" width="18" height="16" viewBox="0 0 18 16"><path d="M0.5 2.5h17v10h-17zM9 12.5v3M5 15.5h8" stroke="#fff" stroke-width="1.1" fill="none"/><path d="M1 0.5h5v4H1z" fill="#000" stroke="#fff" stroke-width="1"/></svg>
<svg style="left:1418px;top:871px" width="17" height="16" viewBox="0 0 17 16"><path d="M0.5 5.5h3l4-4v13l-4-4h-3z" stroke="#fff" stroke-width="1.1" fill="none"/><path d="M10 5a4 4 0 0 1 0 6M12.5 3a7 7 0 0 1 0 10M15 1a10 10 0 0 1 0 14" stroke="#fff" stroke-width="1.1" fill="none"/></svg>
<div class="a" style="left:1443px;top:872px;font-size:13px;color:#fff;line-height:16px">ENG</div>
<div class="a" style="left:1495px;top:862px;font-size:12.5px;color:#fff;line-height:17px">14:56</div>
<div class="a" style="left:1477px;top:880px;font-size:12.5px;color:#fff;line-height:17px">2025/10/21</div>
<svg style="left:1559px;top:870px" width="24" height="24" viewBox="0 0 24 24"><path d="M0.5 0.5h15v10h-9l-3 3v-3H0.5z" fill="#fff"/><path d="M3 3h10M3 5.5h10M3 8h7" stroke="#000" stroke-width="1"/><circle cx="14.5" cy="15.5" r="7" fill="#1f1f1f" stroke="#555" stroke-width="1.2"/><text x="11.3" y="19.5" font-size="11" font-weight="bold" fill="#fff" font-family="Liberation Sans">9</text></svg>
<div class="a" style="left:1595px;top:860px;width:1px;height:40px;background:#6f6f6f"></div>

<!-- watermark -->
<div class="a" style="left:0;top:0;width:1600px;height:860px;overflow:hidden;pointer-events:none">
<div class="wm" style="left:-293px;top:-167px">audit审计01(Audit1)<br>audit-172.18.210.237</div>
<div class="wm" style="left:7px;top:-167px">audit审计01(Audit1)<br>audit-172.18.210.237</div>
<div class="wm" style="left:307px;top:-167px">audit审计01(Audit1)<br>audit-172.18.210.237</div>
<div class="wm" style="left:607px;top:-167px">audit审计01(Audit1)<br>audit-172.18.210.237</div>
<div class="wm" style="left:907px;top:-167px">audit审计01(Audit1)<br>audit-172.18.210.237</div>
<div class="wm" style="left:1207px;top:-167px">audit审计01(Audit1)<br>audit-172.18.210.237</div>
<div class="wm" style="left:1507px;top:-167px">audit审计01(Audit1)<br>audit-172.18.210.237</div>
<div class="wm" style="left:-293px;top:133px">audit审计01(Audit1)<br>audit-172.18.210.237</div>
<div class="wm" style="left:7px;top:133px">audit审计01(Audit1)<br>audit-172.18.210.237</div>
<div class="wm" style="left:307px;top:133px">audit审计01(Audit1)<br>audit-172.18.210.237</div>
<div class="wm" style="left:607px;top:133px">audit审计01(Audit1)<br>audit-172.18.210.237</div>
<div class="wm" style="left:907px;top:133px">audit审计01(Audit1)<br>audit-172.18.210.237</div>
<div class="wm" style="left:1207px;top:133px">audit审计01(Audit1)<br>audit-172.18.210.237</div>
<div class="wm" style="left:1507px;top:133px">audit审计01(Audit1)<br>audit-172.18.210.237</div>
<div class="wm" style="left:-293px;top:433px">audit审计01(Audit1)<br>audit-172.18.210.237</div>
<div class="wm" style="left:7px;top:433px">audit审计01(Audit1)<br>audit-172.18.210.237</div>
<div class="wm" style="left:307px;top:433px">audit审计01(Audit1)<br>audit-172.18.210.237</div>
<div class="wm" style="left:607px;top:433px">audit审计01(Audit1)<br>audit-172.18.210.237</div>
<div class="wm" style="left:907px;top:433px">audit审计01(Audit1)<br>audit-172.18.210.237</div>
<div class="wm" style="left:1207px;top:433px">audit审计01(Audit1)<br>audit-172.18.210.237</div>
<div class="wm" style="left:1507px;top:433px">audit审计01(Audit1)<br>audit-172.18.210.237</div>
<div class="wm" style="left:-293px;top:733px">audit审计01(Audit1)<br>audit-172.18.210.237</div>
<div class="wm" style="left:7px;top:733px">audit审计01(Audit1)<br>audit-172.18.210.237</div>
<div class="wm" style="left:307px;top:733px">audit审计01(Audit1)<br>audit-172.18.210.237</div>
<div class="wm" style="left:607px;top:733px">audit审计01(Audit1)<br>audit-172.18.210.237</div>
<div class="wm" style="left:907px;top:733px">audit审计01(Audit1)<br>audit-172.18.210.237</div>
<div class="wm" style="left:1207px;top:733px">audit审计01(Audit1)<br>audit-172.18.210.237</div>
<div class="wm" style="left:1507px;top:733px">audit审计01(Audit1)<br>audit-172.18.210.237</div>
<div class="wm" style="left:-293px;top:1033px">audit审计01(Audit1)<br>audit-172.18.210.237</div>
<div class="wm" style="left:7px;top:1033px">audit审计01(Audit1)<br>audit-172.18.210.237</div>
<div class="wm" style="left:307px;top:1033px">audit审计01(Audit1)<br>audit-172.18.210.237</div>
<div class="wm" style="left:607px;top:1033px">audit审计01(Audit1)<br>audit-172.18.210.237</div>
<div class="wm" style="left:907px;top:1033px">audit审计01(Audit1)<br>audit-172.18.210.237</div>
<div class="wm" style="left:1207px;top:1033px">audit审计01(Audit1)<br>audit-172.18.210.237</div>
<div class="wm" style="left:1507px;top:1033px">audit审计01(Audit1)<br>audit-172.18.210.237</div>
</div>
</body></html>
